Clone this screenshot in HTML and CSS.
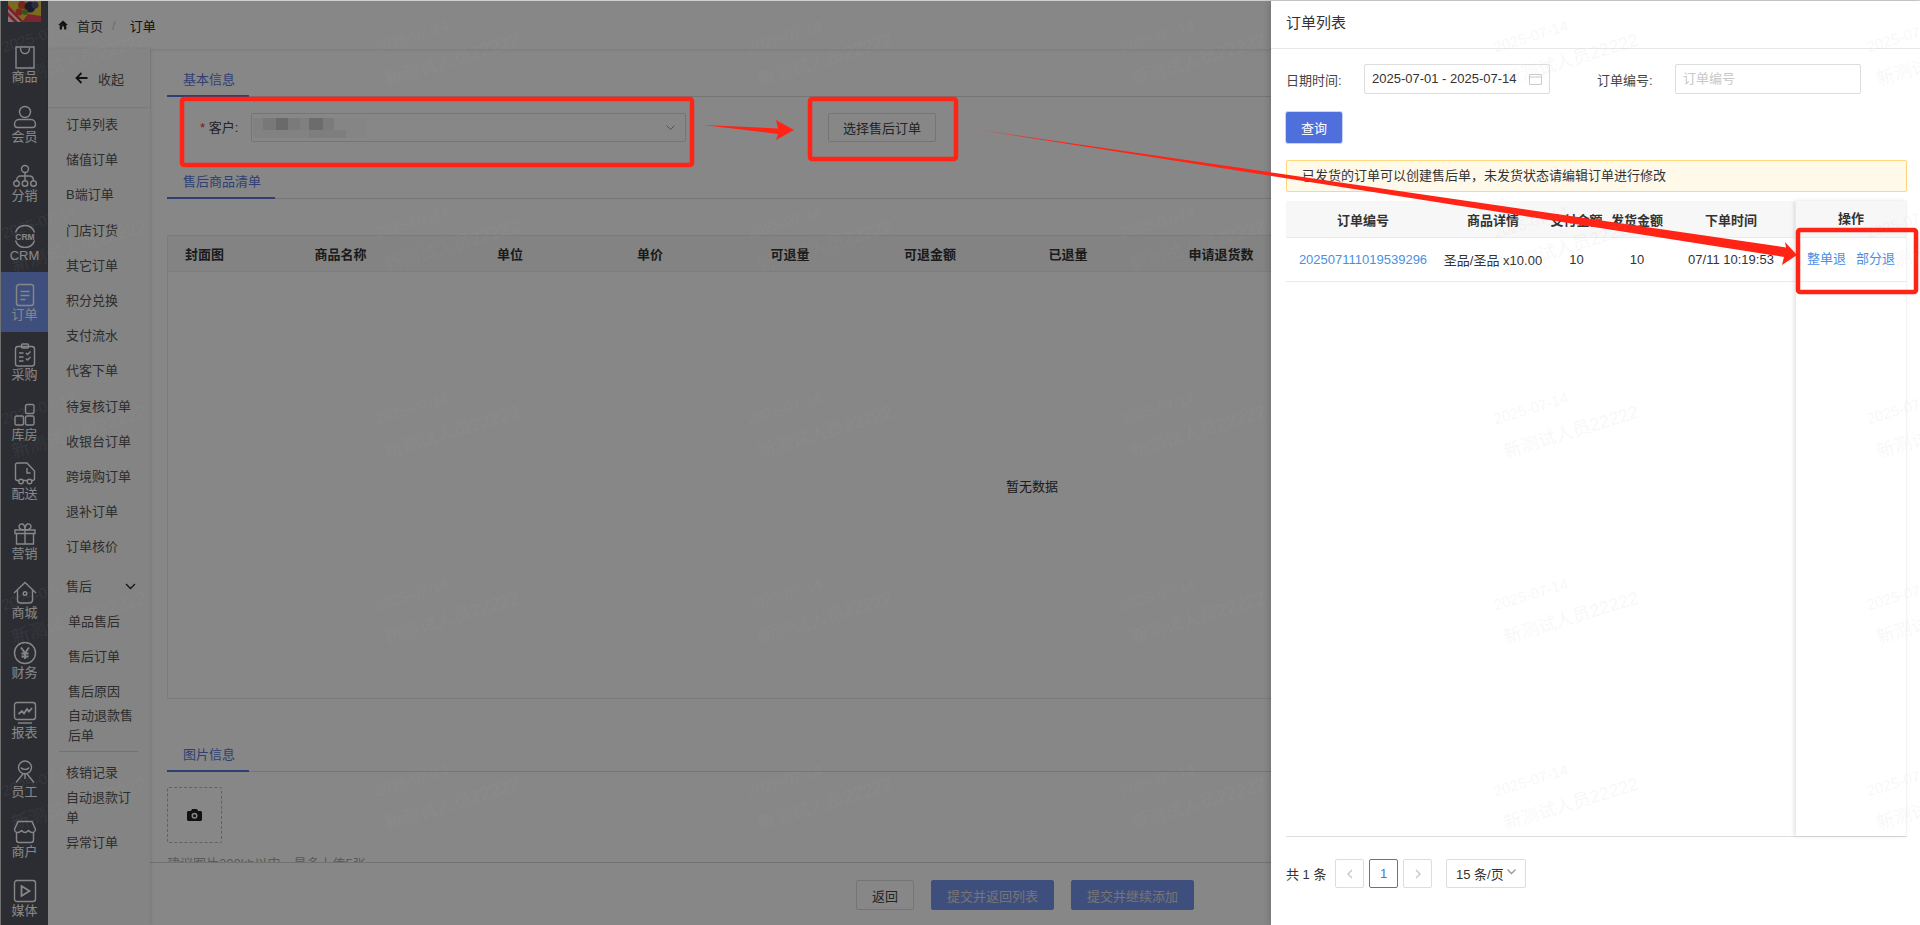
FILE: index.html
```html
<!DOCTYPE html>
<html lang="zh-CN">
<head>
  <meta charset="UTF-8">
  <title>订单</title>
  <link rel="stylesheet" href="styles.css">
</head>
<body>
  <div class="app">
    <aside class="rail">
      <div class="logo">
        <svg width="33" height="21" viewBox="0 0 33 21">
          <rect width="33" height="21" fill="#e8c83c"/>
          <path d="M0 8l14 13H0z" fill="#f6e6e6"/>
          <path d="M0 11l10 10H6L0 15zM0 4l16 17h-3L0 8z" fill="#f03a4a"/>
          <path d="M14 21L20 13l13 2v6z" fill="#e8485a"/>
          <circle cx="14" cy="4" r="4" fill="#e04a30"/>
          <circle cx="22" cy="6" r="5.500" fill="#34345a"/>
          <circle cx="27" cy="4" r="3.500" fill="#55557a"/>
          <circle cx="11" cy="11" r="3.500" fill="#e84a38"/>
          <circle cx="17" cy="11" r="3" fill="#6a9a3a"/>
        </svg>
      </div>
      <a class="rail-item">
        <svg class="rail-icon" viewBox="0 0 24 24"><path d="M3 2h18v21H3z"/><path d="M7.500 3c0 7.500 9 7.500 9 0"/></svg>
        <span>商品</span>
      </a>
      <a class="rail-item">
        <svg class="rail-icon" viewBox="0 0 24 24"><circle cx="12" cy="7" r="5.500"/><path d="M6 14.500h12c3 0 4.500 2.500 4.500 5 0 2-1 3-3 3h-15c-2 0-3-1-3-3 0-2.500 1.500-5 4.500-5z"/></svg>
        <span>会员</span>
      </a>
      <a class="rail-item">
        <svg class="rail-icon" viewBox="0 0 24 24"><circle cx="12" cy="5" r="3.500"/><circle cx="3.500" cy="19.500" r="2.800"/><circle cx="12" cy="19.500" r="2.800"/><circle cx="20.500" cy="19.500" r="2.800"/><path d="M12 8.500v8M3.500 16.500c0-3 2-4.500 4-4.500h8.500c3 0 4.500 1.500 4.500 4.500"/></svg>
        <span>分销</span>
      </a>
      <a class="rail-item">
        <svg class="rail-icon" viewBox="0 0 24 24"><path d="M2.500 8.500C4 4 8 1.500 12 1.500S20 4 21.500 8.500M2.500 16.500c1.500 4.500 5.500 7 9.500 7s8-2.500 9.500-7"/><text class="crm-mark" x="12" y="15.500">CRM</text></svg>
        <span>CRM</span>
      </a>
      <a class="rail-item active">
        <svg class="rail-icon" viewBox="0 0 24 24"><rect x="3.500" y="1.500" width="17" height="21" rx="2.500"/><path d="M7.500 8.500h9M7.500 12.500h9M7.500 16.500h5"/></svg>
        <span>订单</span>
      </a>
      <a class="rail-item">
        <svg class="rail-icon" viewBox="0 0 24 24"><rect x="2.500" y="3.500" width="19" height="19.500" rx="2.500"/><rect x="8.500" y="1" width="7" height="4" rx="1"/><path d="M6 10h4.500M6 14h4.500M6 18h4.500M13 10l1.500 1.500 3-3M13 15.500l1.500 1.500 3-3"/></svg>
        <span>采购</span>
      </a>
      <a class="rail-item">
        <svg class="rail-icon" viewBox="0 0 24 24"><rect x="12.500" y="1.500" width="8.500" height="9" rx="1.500"/><rect x="2" y="13" width="8.500" height="9" rx="1.500"/><rect x="12.500" y="13" width="8.500" height="9" rx="1.500"/></svg>
        <span>库房</span>
      </a>
      <a class="rail-item">
        <svg class="rail-icon" viewBox="0 0 24 24"><path d="M6 18.500H4.500c-1.200 0-2-.8-2-2V3c0-1.200.8-2 2-2h9.500l7.500 8v7.500c0 1.200-.8 2-2 2h-1"/><path d="M10 18.500h4.500M14 6v5h3.500"/><circle cx="8" cy="19.500" r="2.300"/><circle cx="16.500" cy="19.500" r="2.300"/></svg>
        <span>配送</span>
      </a>
      <a class="rail-item">
        <svg class="rail-icon" viewBox="0 0 24 24"><path d="M2 8h20v3.500H2zM3.500 11.500h17V22h-17zM12 8v14"/><path d="M12 8C9 8 6 7 6 4.500 6 2.500 8 1.500 9.500 2 11 2.500 12 5 12 8c0-3 1-5.500 2.500-6 1.500-.5 3.500.5 3.500 2.500C18 7 15 8 12 8z"/></svg>
        <span>营销</span>
      </a>
      <a class="rail-item">
        <svg class="rail-icon" viewBox="0 0 24 24"><path d="M1 12L12 1.500 23 12M4.500 9.500V19c0 2 1 3 3 3h9c2 0 3-1 3-3V9.500"/><circle cx="12" cy="12.500" r="1.800"/></svg>
        <span>商城</span>
      </a>
      <a class="rail-item">
        <svg class="rail-icon" viewBox="0 0 24 24"><circle cx="12" cy="12" r="10.500"/><path class="bold-stroke" d="M8 6.500l4 5.500 4-5.500M12 12v6M8.500 12.500h7M8.500 15.500h7"/></svg>
        <span>财务</span>
      </a>
      <a class="rail-item">
        <svg class="rail-icon" viewBox="0 0 24 24"><rect x="1.500" y="1.500" width="21" height="17" rx="2.500"/><path class="bold-stroke" d="M5.500 13l3.500-3 2 2.500 3-4.500 2 2.500 3-3.500"/><path d="M5 22h14"/></svg>
        <span>报表</span>
      </a>
      <a class="rail-item">
        <svg class="rail-icon" viewBox="0 0 24 24"><circle cx="12" cy="7.500" r="6.500"/><path d="M8 7.500c1 2.500 7 2.500 8 0M10 14l-7 8.500M14 14l7 8.500M12 13v6"/></svg>
        <span>员工</span>
      </a>
      <a class="rail-item">
        <svg class="rail-icon" viewBox="0 0 24 24"><path d="M5 1.500h14l3.500 8c0 2-2 3-3.500 3s-2.500-1-3.500-2c-1 1-2 2-3.500 2s-2.500-1-3.500-2c-1 1-2 2-3.500 2S1.500 11.500 1.500 9.500z"/><path d="M3.500 12v8c0 1.500 1 2.500 2.500 2.500h12c1.500 0 2.500-1 2.500-2.500v-8"/></svg>
        <span>商户</span>
      </a>
      <a class="rail-item">
        <svg class="rail-icon" viewBox="0 0 24 24"><rect x="1.500" y="1.500" width="21" height="21" rx="2.500"/><path class="bold-stroke" d="M8.500 7v10l8-5z"/></svg>
        <span>媒体</span>
      </a>
    </aside>

    <div class="page">
      <header class="topbar">
        <svg class="home-icon" viewBox="0 0 10 10"><path d="M5 .5L.2 5h1.500v4.500h2.300V6.500h2v3h2.300V5h1.500z"/></svg>
        <span class="crumb">首页</span>
        <span class="crumb-sep">/</span>
        <span class="crumb crumb-current">订单</span>
      </header>

      <div class="page-body">
        <nav class="submenu">
          <div class="collapse">
            <svg width="13" height="12" viewBox="0 0 13 12"><path d="M12.500 6H2M6.500 1L1.500 6l5 5"/></svg>
            <span>收起</span>
          </div>
          <a class="menu-item">订单列表</a>
          <a class="menu-item">储值订单</a>
          <a class="menu-item">B端订单</a>
          <a class="menu-item">门店订货</a>
          <a class="menu-item">其它订单</a>
          <a class="menu-item">积分兑换</a>
          <a class="menu-item">支付流水</a>
          <a class="menu-item">代客下单</a>
          <a class="menu-item">待复核订单</a>
          <a class="menu-item">收银台订单</a>
          <a class="menu-item">跨境购订单</a>
          <a class="menu-item">退补订单</a>
          <a class="menu-item">订单核价</a>
          <a class="menu-item menu-group">
            <span>售后</span>
            <svg width="11" height="7" viewBox="0 0 11 7"><path d="M1 1l4.500 4.500L10 1"/></svg>
          </a>
          <a class="menu-item sub">单品售后</a>
          <a class="menu-item sub">售后订单</a>
          <a class="menu-item sub">售后原因</a>
          <a class="menu-item sub menu-wrap">自动退款售后单</a>
          <div class="menu-divider"></div>
          <a class="menu-item">核销记录</a>
          <a class="menu-item menu-wrap">自动退款订单</a>
          <a class="menu-item menu-after-wrap">异常订单</a>
        </nav>

        <div class="main">
          <div class="content">
            <div class="tab-head"><span class="tab">基本信息</span></div>
            <div class="form-row">
              <label class="form-label"><i>*</i> 客户:</label>
              <div class="select">
                <div class="mosaic"></div>
                <svg width="9" height="6" viewBox="0 0 9 6"><path d="M.5 .5l4 4 4-4"/></svg>
              </div>
              <button class="btn btn-plain pick-btn">选择售后订单</button>
            </div>

            <div class="tab-head"><span class="tab">售后商品清单</span></div>
            <div class="goods-table">
              <div class="goods-head">
                <span>封面图</span>
                <span>商品名称</span>
                <span>单位</span>
                <span>单价</span>
                <span>可退量</span>
                <span>可退金额</span>
                <span>已退量</span>
                <span>申请退货数</span>
              </div>
              <div class="goods-empty">暂无数据</div>
            </div>

            <div class="tab-head tab-head-pic"><span class="tab">图片信息</span></div>
            <div class="upload">
              <svg width="15" height="12" viewBox="0 0 15 12">
                <path d="M5 0h5l1 2h2.500c.8 0 1.500.7 1.500 1.500V10.500c0 .8-.7 1.500-1.500 1.500h-12C.7 12 0 11.300 0 10.500V3.500C0 2.700.7 2 1.500 2H4z"/>
                <circle cx="7.500" cy="6.800" r="3" fill="#fff"/>
                <circle cx="7.500" cy="6.800" r="1.500"/>
              </svg>
            </div>
            <p class="hint">建议图片200kb以内，最多上传5张</p>
          </div>
          <footer class="footer">
            <button class="btn btn-plain">返回</button>
            <button class="btn btn-primary">提交并返回列表</button>
            <button class="btn btn-primary">提交并继续添加</button>
          </footer>
        </div>
      </div>
    </div>

    <div class="mask"></div>

    <section class="drawer">
      <h2 class="drawer-title">订单列表</h2>
      <div class="drawer-body">
        <div class="filter-row">
          <label class="filter-label">日期时间:</label>
          <div class="input date-input">
            <span>2025-07-01 - 2025-07-14</span>
            <svg width="13" height="12" viewBox="0 0 13 12"><path d="M.5 1.500h12v10H.5zM.5 4h12"/></svg>
          </div>
          <label class="filter-label filter-label-order">订单编号:</label>
          <div class="input order-input">订单编号</div>
        </div>
        <button class="btn query-btn">查询</button>
        <div class="alert">已发货的订单可以创建售后单，未发货状态请编辑订单进行修改</div>

        <div class="orders">
          <div class="orders-main">
            <div class="orders-row orders-head">
              <span>订单编号</span>
              <span>商品详情</span>
              <span>支付金额</span>
              <span>发货金额</span>
              <span>下单时间</span>
            </div>
            <div class="orders-row orders-line">
              <a class="link">202507111019539296</a>
              <span>圣品/圣品 x10.00</span>
              <span>10</span>
              <span>10</span>
              <span>07/11 10:19:53</span>
            </div>
          </div>
          <div class="orders-fixed">
            <div class="fixed-head">操作</div>
            <div class="fixed-line">
              <a class="link">整单退</a>
              <a class="link">部分退</a>
            </div>
          </div>
        </div>

        <div class="pager">
          <span class="pager-total">共 1 条</span>
          <a class="page-btn"><svg width="6" height="10" viewBox="0 0 6 10"><path d="M5 1L1 5l4 4"/></svg></a>
          <a class="page-btn current">1</a>
          <a class="page-btn"><svg width="6" height="10" viewBox="0 0 6 10"><path d="M1 1l4 4-4 4"/></svg></a>
          <div class="page-size">
            <span>15 条/页</span>
            <svg width="9" height="6" viewBox="0 0 9 6"><path d="M.5 .5l4 4 4-4"/></svg>
          </div>
        </div>
      </div>
    </section>

    <svg class="marks" width="1920" height="925" viewBox="0 0 1920 925">
      <rect class="mark-box" x="182" y="99" width="510" height="66" rx="2"/>
      <rect class="mark-box" x="810" y="99" width="146" height="60" rx="2"/>
      <rect class="mark-box" x="1798" y="230" width="118" height="62" rx="2"/>
      <polygon class="mark-arrow" points="703,125 778,128.500 776,120 794,130 776,140 778,134"/>
      <polygon class="mark-arrow" points="977,129.500 1786,247.500 1785,242 1797,255 1782,265 1784,257"/>
    </svg>

    <div class="watermark">
      <div class="wm-grid">
        <div class="wm"><span class="wm-date">2025-07-14</span><span class="wm-name">新测试人员22222</span></div>
        <div class="wm"><span class="wm-date">2025-07-14</span><span class="wm-name">新测试人员22222</span></div>
        <div class="wm"><span class="wm-date">2025-07-14</span><span class="wm-name">新测试人员22222</span></div>
        <div class="wm"><span class="wm-date">2025-07-14</span><span class="wm-name">新测试人员22222</span></div>
        <div class="wm"><span class="wm-date">2025-07-14</span><span class="wm-name">新测试人员22222</span></div>
        <div class="wm"><span class="wm-date">2025-07-14</span><span class="wm-name">新测试人员22222</span></div>
        <div class="wm"><span class="wm-date">2025-07-14</span><span class="wm-name">新测试人员22222</span></div>
        <div class="wm"><span class="wm-date">2025-07-14</span><span class="wm-name">新测试人员22222</span></div>
        <div class="wm"><span class="wm-date">2025-07-14</span><span class="wm-name">新测试人员22222</span></div>
        <div class="wm"><span class="wm-date">2025-07-14</span><span class="wm-name">新测试人员22222</span></div>
        <div class="wm"><span class="wm-date">2025-07-14</span><span class="wm-name">新测试人员22222</span></div>
        <div class="wm"><span class="wm-date">2025-07-14</span><span class="wm-name">新测试人员22222</span></div>
        <div class="wm"><span class="wm-date">2025-07-14</span><span class="wm-name">新测试人员22222</span></div>
        <div class="wm"><span class="wm-date">2025-07-14</span><span class="wm-name">新测试人员22222</span></div>
        <div class="wm"><span class="wm-date">2025-07-14</span><span class="wm-name">新测试人员22222</span></div>
        <div class="wm"><span class="wm-date">2025-07-14</span><span class="wm-name">新测试人员22222</span></div>
        <div class="wm"><span class="wm-date">2025-07-14</span><span class="wm-name">新测试人员22222</span></div>
        <div class="wm"><span class="wm-date">2025-07-14</span><span class="wm-name">新测试人员22222</span></div>
        <div class="wm"><span class="wm-date">2025-07-14</span><span class="wm-name">新测试人员22222</span></div>
        <div class="wm"><span class="wm-date">2025-07-14</span><span class="wm-name">新测试人员22222</span></div>
        <div class="wm"><span class="wm-date">2025-07-14</span><span class="wm-name">新测试人员22222</span></div>
        <div class="wm"><span class="wm-date">2025-07-14</span><span class="wm-name">新测试人员22222</span></div>
        <div class="wm"><span class="wm-date">2025-07-14</span><span class="wm-name">新测试人员22222</span></div>
        <div class="wm"><span class="wm-date">2025-07-14</span><span class="wm-name">新测试人员22222</span></div>
        <div class="wm"><span class="wm-date">2025-07-14</span><span class="wm-name">新测试人员22222</span></div>
        <div class="wm"><span class="wm-date">2025-07-14</span><span class="wm-name">新测试人员22222</span></div>
        <div class="wm"><span class="wm-date">2025-07-14</span><span class="wm-name">新测试人员22222</span></div>
        <div class="wm"><span class="wm-date">2025-07-14</span><span class="wm-name">新测试人员22222</span></div>
        <div class="wm"><span class="wm-date">2025-07-14</span><span class="wm-name">新测试人员22222</span></div>
        <div class="wm"><span class="wm-date">2025-07-14</span><span class="wm-name">新测试人员22222</span></div>
      </div>
    </div>
  </div>
</body>
</html>
```
FILE: styles.css
```css
* {
  box-sizing: border-box;
}
html, body {
  margin: 0;
  height: 100%;
  overflow: hidden;
}
body {
  font-family: "Liberation Sans", "Noto Sans CJK SC", sans-serif;
  font-size: 13px;
  color: #333;
  background-color: #d4d4d4;
}
a {
  color: inherit;
  text-decoration: none;
}
svg {
  display: block;
}
.app {
  position: relative;
  display: flex;
  height: 925px;
  padding: 1px 0 0 1px;
  overflow: hidden;
}

/* icon rail */
.rail {
  flex: 0 0 47px;
  background-color: #52565f;
  overflow: hidden;
}
.logo {
  height: 33px;
  padding-left: 7px;
}
.rail-item {
  display: flex;
  flex-direction: column;
  align-items: center;
  height: 59.600px;
  padding-top: 11px;
  color: #fff;
  line-height: 16px;
}
.rail-item.active {
  background-color: #7896ed;
}
.rail-icon {
  width: 24px;
  height: 24px;
  fill: none;
  stroke: #fff;
  stroke-width: 1.400;
}
.bold-stroke {
  stroke-width: 1.800;
}
.crm-mark {
  fill: #fff;
  stroke: none;
  font-size: 8.500px;
  font-weight: bold;
  text-anchor: middle;
}

/* page */
.page {
  flex: 1;
  display: flex;
  flex-direction: column;
  min-width: 0;
  background-color: #fff;
}
.topbar {
  flex: 0 0 48px;
  display: flex;
  align-items: center;
  padding-left: 10px;
  background-color: #fff;
  box-shadow: 0 1px 3px rgba(0,0,0,0.1);
  position: relative;
}
.home-icon {
  width: 10px;
  height: 10px;
  fill: #222;
  margin-right: 9px;
}
.crumb {
  color: #444;
}
.crumb-current {
  color: #222;
}
.crumb-sep {
  margin: 0 14px 0 9px;
  color: #ccc;
}
.page-body {
  flex: 1;
  display: flex;
  min-height: 0;
}

/* second level menu */
.submenu {
  flex: 0 0 102px;
  background-color: #fafafa;
  color: #555;
  box-shadow: 1px 0 3px rgba(0,0,0,0.12);
  position: relative;
}
.collapse {
  display: flex;
  align-items: center;
  gap: 10px;
  height: 58px;
  padding-left: 27px;
  box-shadow: 0 1px 2px rgba(0,0,0,0.1);
}
.collapse svg {
  fill: none;
  stroke: #222;
  stroke-width: 1.800;
}
.menu-item {
  display: block;
  padding: 0 15px 0 18px;
  line-height: 35.200px;
}
.menu-item.sub {
  padding-left: 20px;
}
.menu-group {
  display: flex;
  align-items: center;
  justify-content: space-between;
  margin-top: 4px;
  padding-right: 14px;
}
.menu-group svg {
  fill: none;
  stroke: #222;
  stroke-width: 1.300;
}
.menu-wrap {
  line-height: 20px;
  margin-top: -3px;
}
.menu-divider {
  height: 1px;
  margin: 5px 12px 3px 11px;
  background-color: #d8d8d8;
}
.menu-after-wrap {
  margin-top: -3px;
}

/* main column */
.main {
  flex: 1;
  display: flex;
  flex-direction: column;
  min-width: 0;
}
.content {
  flex: 1;
  padding: 17px 23px 0 17px;
  overflow: hidden;
  min-height: 0;
}
.tab-head {
  height: 31px;
  border-bottom: 1px solid #ddd;
}
.tab {
  display: inline-block;
  height: 31px;
  padding: 0 14px 0 16px;
  line-height: 28px;
  color: #5c78d8;
  border-bottom: 2px solid #5c78d8;
}
.form-row {
  display: flex;
  height: 71px;
  padding-top: 16px;
}
.form-label {
  width: 84px;
  padding-left: 33px;
  line-height: 29px;
  color: #444;
  white-space: nowrap;
}
.form-label i {
  color: #d8402a;
  font-style: normal;
}
.select {
  display: flex;
  align-items: center;
  justify-content: space-between;
  width: 435px;
  height: 29px;
  padding: 0 10px 0 1px;
  border: 1px solid #ddd;
  border-radius: 2px;
}
.select svg {
  fill: none;
  stroke: #999;
}
.mosaic {
  width: 113px;
  height: 20px;
  background:
    linear-gradient(90deg, #f4f4f4 0 9%, #e2e2e2 9% 20%, #c8c8c8 20% 31%, #e6e6e6 31% 42%, #f0f0f0 42% 50%, #cccccc 50% 62%, #e8e8e8 62% 72%, #fcfcfc 72% 100%) 0 0 / 100% 60% no-repeat,
    linear-gradient(90deg, #f6f6f6 0 50%, #eeeeee 50% 82%, #fcfcfc 82% 100%) 0 100% / 100% 40% no-repeat;
}
.btn {
  height: 30px;
  padding: 0 15px;
  border: 1px solid transparent;
  border-radius: 2px;
  font: inherit;
  background: none;
}
.btn-plain {
  border-color: #ddd;
  background-color: #fff;
  color: #444;
}
.btn-primary {
  background-color: #7896ed;
  border-color: #7896ed;
  color: #ddd;
}
.pick-btn {
  height: 29px;
  margin-left: 142px;
  padding: 0 14px;
}
.goods-table {
  display: flex;
  flex-direction: column;
  width: 1730px;
  height: 464px;
  margin-top: 36px;
  border: 1px solid #e8e8e8;
}
.goods-head {
  display: grid;
  grid-template-columns: 73px 199px 140px 140px 140px 140px 136px 170px;
  flex: 0 0 36px;
  align-items: center;
  text-align: center;
  font-weight: bold;
  background-color: #f8f8f8;
  border-bottom: 1px solid #ececec;
}
.goods-empty {
  flex: 1;
  display: flex;
  align-items: center;
  justify-content: center;
  color: #333;
}
.tab-head-pic {
  margin-top: 42px;
}
.upload {
  display: flex;
  align-items: center;
  justify-content: center;
  width: 55px;
  height: 56px;
  margin-top: 15px;
  border: 1px dashed #b8b8b8;
  border-radius: 2px;
}
.upload svg {
  fill: #222;
}
.hint {
  margin: 13px 0 0;
  line-height: 16px;
  color: #aaa;
}
.footer {
  flex: 0 0 63px;
  display: flex;
  justify-content: center;
  gap: 17px;
  padding: 17px 20px 0 0;
  border-top: 1px solid #d8d8d8;
  background-color: #fff;
}

/* modal layers */
.mask {
  position: absolute;
  left: 0;
  right: 0;
  top: 1px;
  bottom: 0;
  background-color: rgba(0,0,0,0.47);
}
.drawer {
  position: absolute;
  top: 1px;
  right: 0;
  bottom: 0;
  display: flex;
  flex-direction: column;
  width: 649px;
  background-color: #fff;
  box-shadow: -2px 0 6px rgba(0,0,0,0.15);
}
.drawer-title {
  flex: 0 0 48px;
  margin: 0;
  padding-left: 15px;
  line-height: 44px;
  font-size: 15px;
  font-weight: normal;
  border-bottom: 1px solid #e8e8e8;
}
.drawer-body {
  flex: 1;
  display: flex;
  flex-direction: column;
  align-items: flex-start;
  min-height: 0;
  padding: 15px 13px 37px 15px;
}
.filter-row {
  display: flex;
  align-items: center;
}
.filter-label {
  width: 78px;
  color: #444;
}
.filter-label-order {
  margin-left: 47px;
}
.input {
  height: 30px;
  padding: 0 7px;
  border: 1px solid #ddd;
  border-radius: 2px;
  line-height: 28px;
}
.date-input {
  display: flex;
  align-items: center;
  justify-content: space-between;
  width: 186px;
}
.date-input svg {
  fill: none;
  stroke: #ccc;
}
.order-input {
  width: 186px;
  color: #c8c8c8;
}
.query-btn {
  width: 56px;
  height: 31px;
  margin-top: 18px;
  padding: 0;
  background-color: #4f6fdc;
  color: #fff;
  box-shadow: 0 0 0 1px #c9d4f5;
}
.alert {
  width: 621px;
  height: 32px;
  margin-top: 17px;
  padding-left: 15px;
  line-height: 30px;
  border: 1px solid #ffd77a;
  border-radius: 2px;
  background-color: #fff9ea;
}
.orders {
  flex: 1;
  display: flex;
  width: 621px;
  min-height: 0;
  margin-top: 9px;
  border-bottom: 1px solid #ddd;
}
.orders-main {
  flex: 0 0 509px;
}
.orders-row {
  display: grid;
  grid-template-columns: 154px 106px 61px 60px 128px;
  align-items: center;
  text-align: center;
}
.orders-head {
  height: 37px;
  font-size: 13px;
  font-weight: bold;
  background-color: #f7f7f7;
  border-bottom: 1px solid #ebebeb;
}
.orders-line {
  height: 44px;
  border-bottom: 1px solid #ebebeb;
}
.link {
  color: #4a90e2;
}
.orders-fixed {
  flex: 1;
  margin-left: 1px;
  box-shadow: -2px 0 4px rgba(0,0,0,0.12);
  border-right: 1px solid #f4f4f4;
}
.fixed-head {
  height: 37px;
  line-height: 36px;
  text-align: center;
  font-weight: bold;
  background-color: #f7f7f7;
  border-bottom: 1px solid #ebebeb;
}
.fixed-line {
  display: flex;
  justify-content: center;
  gap: 10px;
  height: 44px;
  line-height: 42px;
  border-bottom: 1px solid #ebebeb;
}
.pager {
  display: flex;
  align-items: center;
  gap: 5px;
  margin-top: 22px;
}
.pager-total {
  width: 44px;
}
.page-btn {
  display: flex;
  align-items: center;
  justify-content: center;
  width: 29px;
  height: 29px;
  border: 1px solid #ddd;
  border-radius: 2px;
}
.page-btn svg {
  fill: none;
  stroke: #c4c4c4;
  stroke-width: 1.300;
}
.page-btn.current {
  border-color: #4f6fdc;
  color: #4f6fdc;
}
.page-size {
  display: flex;
  align-items: center;
  justify-content: space-between;
  width: 80px;
  height: 29px;
  margin-left: 9px;
  padding: 0 9px;
  border: 1px solid #ddd;
  border-radius: 2px;
}
.page-size svg {
  fill: none;
  stroke: #999;
  stroke-width: 1.300;
  margin-bottom: 4px;
}

/* annotations drawn over the screenshot */
.marks {
  position: absolute;
  left: 0;
  top: 0;
}
.mark-box {
  fill: none;
  stroke: #ff2415;
  stroke-width: 4.500;
}
.mark-arrow {
  fill: #ff2415;
}

/* watermark */
.watermark {
  position: absolute;
  inset: 0;
  overflow: hidden;
  pointer-events: none;
}
.wm-grid {
  display: grid;
  grid-template-columns: repeat(6, 373px);
  grid-auto-rows: 186px;
  margin: 10px 0 0 4px;
}
.wm {
  width: 137px;
  height: 68px;
  transform: rotate(-17deg);
  color: rgba(170,170,170,0.1);
  line-height: 34px;
  white-space: nowrap;
}
.wm span {
  display: block;
}
.wm-date {
  font-size: 15px;
}
.wm-name {
  font-size: 18px;
}
```
